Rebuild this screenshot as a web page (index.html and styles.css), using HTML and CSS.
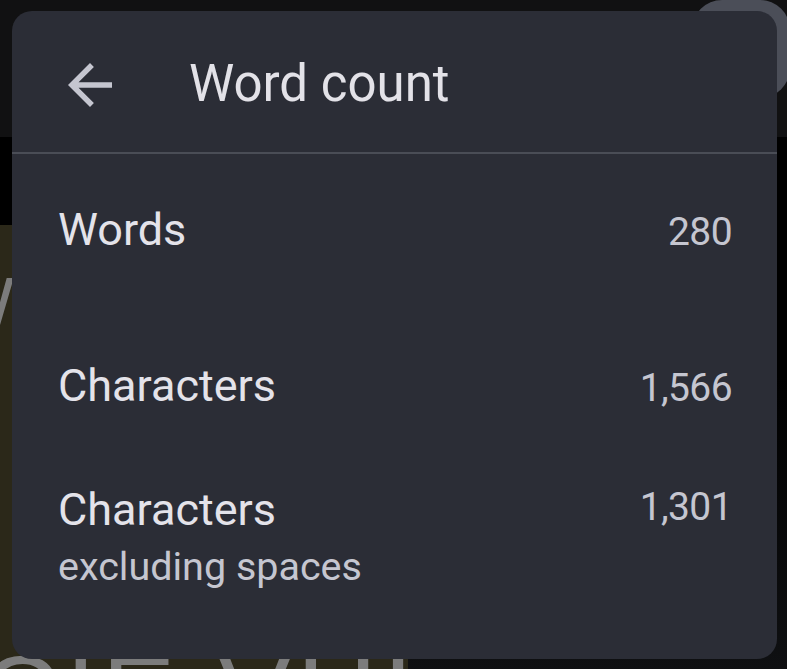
FILE: index.html
```html
<!DOCTYPE html>
<html lang="en">
<head>
<meta charset="utf-8">
<title>Word count</title>
<link rel="stylesheet" href="styles.css">
</head>
<body>
<div class="backdrop">
  <div class="topbar"><div class="pill"></div></div>
  <div class="lower">
    <div class="doc">
      <div class="doc-line doc-line-1">W</div>
      <div class="doc-line doc-line-2">CIE VUIS</div>
    </div>
  </div>
</div>

<div class="dialog">
  <div class="dialog-header">
    <svg class="back-icon" viewBox="0 0 24 24" width="66" height="66" aria-hidden="true">
      <path d="M20 11H7.83l5.59-5.59L12 4l-8 8 8 8 1.41-1.41L7.83 13H20v-2z" fill="#c5c6d0"/>
    </svg>
    <div class="dialog-title">Word count</div>
  </div>
  <div class="divider"></div>
  <div class="stats">
    <div class="stat stat-words">
      <div class="stat-label">Words</div>
      <div class="stat-value">280</div>
    </div>
    <div class="stat stat-chars">
      <div class="stat-label">Characters</div>
      <div class="stat-value">1,566</div>
    </div>
    <div class="stat stat-nospace">
      <div class="stat-text">
        <div class="stat-label">Characters</div>
        <div class="stat-sub">excluding spaces</div>
      </div>
      <div class="stat-value stat-value-top">1,301</div>
    </div>
  </div>
</div>
</body>
</html>
```

FILE: styles.css
```css
* { box-sizing: border-box; }

html, body {
  margin: 0;
  padding: 0;
}

body {
  width: 787px;
  height: 669px;
  overflow: hidden;
  position: relative;
  background: #000;
  font-family: Roboto, "Noto Sans", sans-serif;
}

.backdrop {
  display: flex;
  flex-direction: column;
  width: 787px;
  height: 669px;
  overflow: hidden;
}

.topbar {
  flex: none;
  height: 137px;
  background: #111112;
  display: flex;
  justify-content: flex-end;
  align-items: flex-start;
}

.pill {
  width: 98px;
  height: 98px;
  margin-right: -3px;
  background: #4b4e58;
  border-radius: 30px;
}

.lower {
  flex: 1;
  min-height: 0;
  overflow: hidden;
  display: flex;
  align-items: stretch;
  background: linear-gradient(#000 0%, #000 45%, #0f1012 100%);
}

.doc {
  width: 408px;
  margin-top: 88px;
  background: #2b2819;
  overflow: hidden;
  display: flex;
  flex-direction: column;
  color: #7c7c7c;
  font-family: "Liberation Sans", Arial, sans-serif;
}

.doc-line {
  flex: none;
  white-space: nowrap;
  font-size: 72px;
  line-height: 72px;
}

.doc-line-1 {
  margin-top: 42px;
  margin-left: -54px;
}

.doc-line-2 {
  margin-top: 300px;
  margin-left: -20px;
  font-size: 110px;
  line-height: 110px;
  letter-spacing: 6px;
}

.dialog {
  position: absolute;
  left: 12px;
  top: 11px;
  width: 765px;
  height: 648px;
  background: #2b2d36;
  border-radius: 20px;
  overflow: hidden;
  display: flex;
  flex-direction: column;
}

.dialog-header {
  flex: none;
  height: 141px;
  display: flex;
  align-items: flex-start;
}

.back-icon {
  display: block;
  margin-left: 45px;
  margin-top: 41px;
  flex: none;
}

.dialog-title {
  margin-left: 66px;
  margin-top: 43px;
  font-size: 51px;
  line-height: 60px;
  color: #e3e2e8;
  white-space: nowrap;
}

.divider {
  flex: none;
  height: 2px;
  background: #4a4d56;
}

.stats {
  display: flex;
  flex-direction: column;
  padding: 50px 45px 0 46px;
}

.stat {
  display: flex;
  justify-content: space-between;
  align-items: baseline;
}

.stat-chars { margin-top: 102px; }
.stat-nospace {
  margin-top: 70px;
  align-items: flex-start;
}

.stat-label {
  font-size: 45px;
  line-height: 52px;
  color: #e4e3ea;
}

.stat-value {
  font-size: 39px;
  line-height: 52px;
  letter-spacing: -0.6px;
  color: #c5c6d0;
}

.stat-value-top {
  line-height: 46px;
}

.stat-sub {
  margin-top: 8px;
  font-size: 39.5px;
  line-height: 46px;
  color: #c5c6d0;
}
```
